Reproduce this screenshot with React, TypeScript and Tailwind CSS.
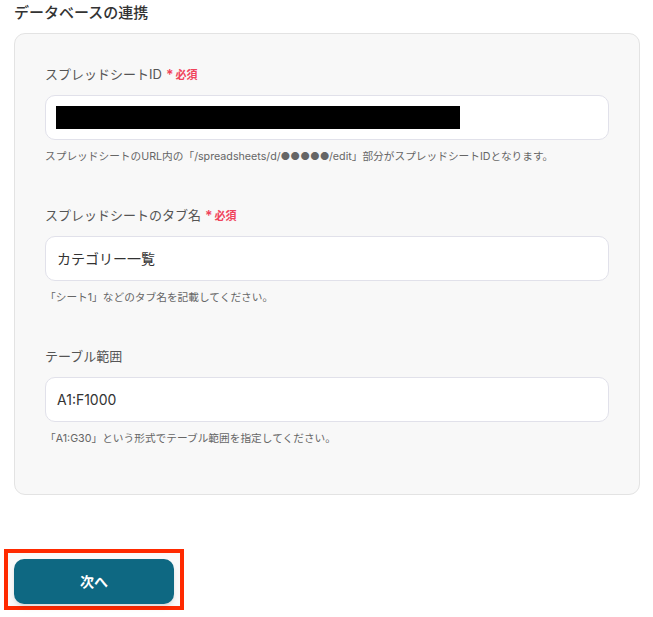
const fieldFont = { fontFamily: 'Inter, "Noto Sans CJK JP", sans-serif' };

type FieldProps = {
  label: string;
  required?: boolean;
  help: string;
  children: React.ReactNode;
};

const Field = ({ label, required, help, children }: FieldProps) => {
  return (
    <div className="flex flex-col">
      {/* LABEL */}
      <div className="flex items-center h-[20px] text-[13px] text-[#555]">
        <span>{label}</span>
        {required && (
          <span className="ml-[4px] flex items-center text-[11px] font-semibold text-[#f0435b]">
            <span className="text-[14px] mr-[2px] leading-none">*</span>必須
          </span>
        )}
      </div>
      {/* INPUT */}
      <div className="mt-[10px] h-[45px] rounded-[10px] border border-[#e1e1ea] bg-white flex items-center px-[11px] text-[14px] text-[#333]">
        {children}
      </div>
      {/* HELP */}
      <p className="mt-[10px] text-[10.7px] leading-[14px] text-[#666]">{help}</p>
    </div>
  );
};

const App = () => {
  return (
    <div className="w-[653px] h-[617px] bg-white px-[14px] pt-[3px]" style={fieldFont}>
      <h2 className="text-[15px] leading-[20px] font-medium text-[#333]">データベースの連携</h2>

      {/* CARD */}
      <div className="mt-[10px] w-[626px] rounded-[11px] border border-[#e3e3e3] bg-[#f8f8f8] pt-[31px] pb-[48px] pl-[30px] pr-[30px] flex flex-col gap-[42px]">
        <Field
          label="スプレッドシートID"
          required
          help="スプレッドシートのURL内の「/spreadsheets/d/●●●●●/edit」部分がスプレッドシートIDとなります。"
        >
          <div className="w-[404px] h-[23px] bg-black -ml-[1px]" />
        </Field>
        <Field label="スプレッドシートのタブ名" required help="「シート1」などのタブ名を記載してください。">
          カテゴリー一覧
        </Field>
        <Field label="テーブル範囲" help="「A1:G30」という形式でテーブル範囲を指定してください。">
          A1:F1000
        </Field>
      </div>

      {/* BUTTON */}
      <div className="mt-[54px] -ml-[10px] w-[180px] border-[4px] border-[#ff2a00] bg-[#fafafa] pt-[6px] pb-[2px] px-[6px]">
        <button className="w-[160px] h-[45px] rounded-[10px] bg-[#0e6882] text-white text-[14px] font-bold shadow-md">
          次へ
        </button>
      </div>
    </div>
  );
};

export default App;
